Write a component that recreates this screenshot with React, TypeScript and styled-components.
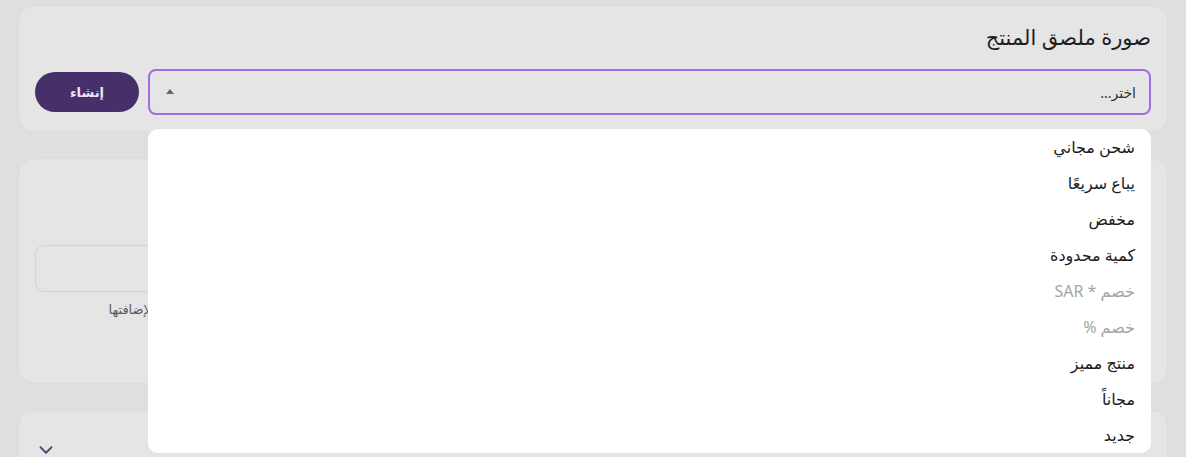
import React from 'react';
import styled, { createGlobalStyle } from 'styled-components';
import { ChevronDown } from 'lucide-react';

const GlobalStyle = createGlobalStyle`
  html, body {
    margin: 0;
    padding: 0;
    background: #dfdfdf;
    font-family: "Noto Sans", "DejaVu Sans", sans-serif;
    color: #222;
  }
  * { box-sizing: border-box; }
`;

const Page = styled.div`
  direction: rtl;
  height: 457px;
  overflow: hidden;
  padding: 5px 18px 0 18px;
  display: flex;
  flex-direction: column;
  gap: 26px;
`;

const Card = styled.section<{ $h?: number }>`
  background: #e5e5e5;
  border: 1px solid #dcdcdc;
  border-radius: 16px;
  padding: 18px 16px 16px;
  ${({ $h }) => ($h ? `min-height: ${$h}px;` : '')}
  flex-shrink: 0;
`;

const Title = styled.h2`
  margin: 0 0 18px 0;
  font-size: 21px;
  line-height: 27px;
  font-weight: 400;
  color: #1e1e1e;
`;

const Row = styled.div`
  display: flex;
  align-items: center;
  gap: 9px;
`;

const SelectWrap = styled.div`
  position: relative;
  flex: 1;
`;

const SelectBox = styled.div`
  height: 46px;
  border: 2px solid #a36ae2;
  border-radius: 8px;
  display: flex;
  align-items: center;
  justify-content: space-between;
  padding: 0 13px 0 16px;
  font-size: 14px;
  color: #333;
`;

const Caret = styled.span`
  width: 0;
  height: 0;
  border-left: 4px solid transparent;
  border-right: 4px solid transparent;
  border-bottom: 5px solid #6d6278;
  margin-top: -2px;
`;

const Menu = styled.ul`
  position: absolute;
  top: 60px;
  left: 0;
  right: 0;
  margin: 0;
  padding: 0;
  list-style: none;
  background: #ffffff;
  border-radius: 10px;
  z-index: 10;
`;

const MenuItem = styled.li<{ $muted?: boolean }>`
  height: 36px;
  display: flex;
  align-items: center;
  padding: 0 16px;
  font-size: 16px;
  color: ${({ $muted }) => ($muted ? '#a5a5a5' : '#1c1c1c')};
`;

const CreateBtn = styled.button`
  width: 104px;
  height: 40px;
  border: none;
  border-radius: 20px;
  background: #47306a;
  color: #ece6f4;
  font-family: inherit;
  font-size: 13px;
  font-weight: 700;
`;

const SubTitle = styled.h3`
  margin: 10px 0 32px 0;
  font-size: 18px;
  line-height: 26px;
  font-weight: 400;
  text-align: center;
`;

const Grid = styled.div`
  display: grid;
  grid-template-columns: 1fr 1fr;
  gap: 16px;
`;

const Field = styled.div`
  display: flex;
  flex-direction: column;
  align-items: center;
  gap: 8px;
`;

const Input = styled.div`
  width: 100%;
  height: 47px;
  border: 1px solid #d3d3d3;
  border-radius: 9px;
`;

const Hint = styled.p`
  margin: 0;
  font-size: 13px;
  line-height: 18px;
  color: #5a5a5a;
  text-align: center;
  white-space: nowrap;
`;

const Toggle = styled.div`
  display: flex;
  justify-content: flex-end;
  padding-top: 10px;
  color: #54446b;
`;

const options: { label: string; muted?: boolean }[] = [
  { label: 'شحن مجاني' },
  { label: 'يباع سريعًا' },
  { label: 'مخفض' },
  { label: 'كمية محدودة' },
  { label: 'خصم * SAR', muted: true },
  { label: 'خصم %', muted: true },
  { label: 'منتج مميز' },
  { label: 'مجاناً' },
  { label: 'جديد' },
];

export default function App() {
  return (
    <>
      <GlobalStyle />
      <Page>
        <Card>
          <Title>صورة ملصق المنتج</Title>
          <Row>
            <SelectWrap>
              <SelectBox>
                <span>اختر...</span>
                <Caret />
              </SelectBox>
              <Menu>
                {options.map((o) => (
                  <MenuItem key={o.label} $muted={o.muted}>
                    {o.label}
                  </MenuItem>
                ))}
              </Menu>
            </SelectWrap>
            <CreateBtn>إنشاء</CreateBtn>
          </Row>
        </Card>
        <Card $h={226}>
          <SubTitle>الملصقات المضافة</SubTitle>
          <Grid>
            <Field>
              <Input />
              <Hint>يمكنك إضافة أكثر من ملصق للمنتج الواحد</Hint>
            </Field>
            <Field>
              <Input />
              <Hint>اختر الملصقات المناسبة للمنتج من القائمة ثم اضغط على زر الإنشاء لإضافتها</Hint>
            </Field>
          </Grid>
        </Card>
        <Card $h={80}>
          <Toggle>
            <ChevronDown size={22} strokeWidth={2} />
          </Toggle>
        </Card>
      </Page>
    </>
  );
}
